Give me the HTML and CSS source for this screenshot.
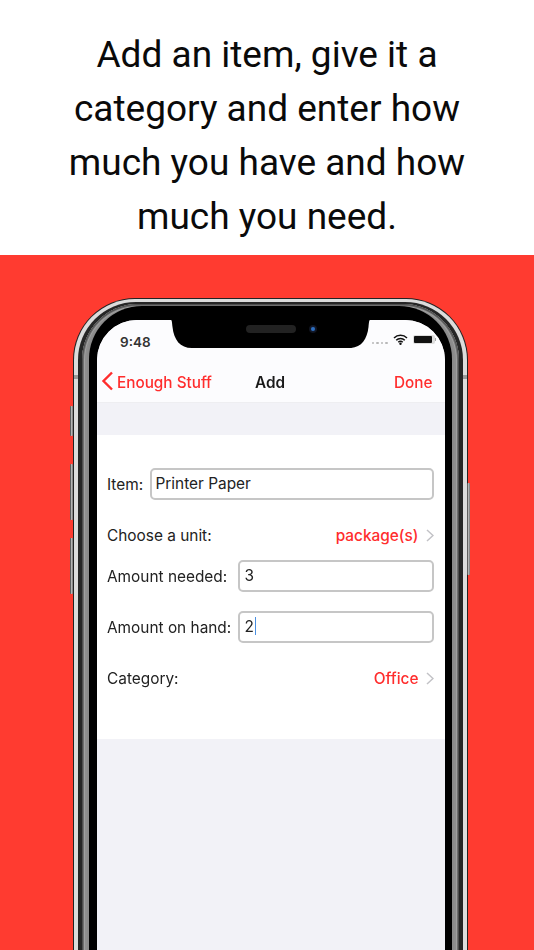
FILE: index.html
```html
<!DOCTYPE html>
<html lang="en">
<head>
<meta charset="utf-8">
<title>Enough Stuff</title>
<link rel="stylesheet" href="styles.css">
</head>
<body>
<header class="hero">
  <h1>Add an item, give it a<br>category and enter how<br>much you have and how<br>much you need.</h1>
</header>
<main class="stage">
  <div class="phone">
    <span class="btn btn-mute"></span>
    <span class="btn btn-up"></span>
    <span class="btn btn-down"></span>
    <span class="btn btn-power"></span>
    <span class="band band-l"></span>
    <span class="band band-r"></span>
    <div class="rim-light">
      <div class="rim-dark">
        <div class="rim-steel">
          <div class="rim-black">
            <div class="screen">
              <svg class="notch" width="199" height="29" viewBox="0 0 199 29"><path d="M0 0H199C198 0 198 3 197.500 7C196 20 190 28 178 28H21C9 28 3 20 1.500 7C1 3 1 0 0 0Z" fill="#000"/></svg>
              <span class="speaker"></span>
              <span class="camera"></span>
              <div class="status">
                <span class="time">9:48</span>
                <span class="status-right">
                  <span class="signal"><i></i><i></i><i></i><i></i></span>
                  <svg class="wifi" width="15" height="11" viewBox="0 0 15 11"><path d="M1 4a9.200 9.200 0 0 1 13 0M3.200 6.200a6 6 0 0 1 8.600 0M5.300 8.200a3 3 0 0 1 4.400 0" fill="none" stroke="#111" stroke-width="1.500"/><circle cx="7.500" cy="9.800" r="1.200" fill="#111"/></svg>
                  <span class="battery"><b></b></span>
                </span>
              </div>
              <nav class="navbar">
                <span class="back">
                  <svg width="13" height="20" viewBox="0 0 13 20"><path d="M11 1.500L2.500 10L11 18.500" fill="none" stroke="#ff2d2d" stroke-width="2.400"/></svg>
                  Enough Stuff
                </span>
                <span class="title">Add</span>
                <span class="done">Done</span>
              </nav>
              <div class="spacer"></div>
              <section class="form">
                <div class="row row-item">
                  <span class="label">Item:</span>
                  <div class="field">Printer Paper</div>
                </div>
                <div class="row row-link row-unit">
                  <span class="label">Choose a unit:</span>
                  <span class="value">package(s)
                    <svg width="8" height="13" viewBox="0 0 8 13"><path d="M1 1l6 5.500L1 12" fill="none" stroke="#c2c2c6" stroke-width="1.500"/></svg>
                  </span>
                </div>
                <div class="row row-needed">
                  <span class="label">Amount needed:</span>
                  <div class="field field-short">3</div>
                </div>
                <div class="row row-hand">
                  <span class="label">Amount on hand:</span>
                  <div class="field field-short">2<span class="caret"></span></div>
                </div>
                <div class="row row-link row-category">
                  <span class="label">Category:</span>
                  <span class="value">Office
                    <svg width="8" height="13" viewBox="0 0 8 13"><path d="M1 1l6 5.500L1 12" fill="none" stroke="#c2c2c6" stroke-width="1.500"/></svg>
                  </span>
                </div>
              </section>
              <div class="rest"></div>
            </div>
          </div>
        </div>
      </div>
    </div>
  </div>
</main>
</body>
</html>
```
FILE: styles.css
```css
* { box-sizing: border-box; }
html, body { margin: 0; height: 950px; overflow: hidden; }
body { display: flex; flex-direction: column; background: #fff; font-family: Inter, "Liberation Sans", sans-serif; }

.hero { height: 255px; flex: none; background: #fff; display: flex; justify-content: center; padding-top: 28px; }
.hero h1 { margin: 0; font: 400 37px/54px Roboto, "Liberation Sans", sans-serif; color: #0a0a0a; text-align: center; }

.stage { flex: 1; background: #ff3b30; overflow: hidden; display: flex; flex-direction: column; align-items: flex-start; padding: 43px 0 0 73px; }

.phone { position: relative; width: 395px; height: 760px; flex: none; background: #232323; border-radius: 62px; padding: 1px 1px 0; }
.rim-light { height: 100%; background: #dcdcdc; border-radius: 61px; padding: 3px 4px 0; }
.rim-dark { height: 100%; background: #262626; border-radius: 58px; padding: 2px 4px 0; }
.rim-steel { height: 100%; background: #8a8a8a; border-radius: 56px; padding: 2px 7px 0; box-shadow: inset 0 0 0 1px #4e4e4e, inset 0 0 0 2px #6e6e6e, inset 0 0 0 3px #a0a0a0, inset 0 0 0 5px #8e8e8e; }
.rim-black { height: 100%; background: #000; border-radius: 53px; padding: 14px 8px 0; }

.screen { position: relative; height: 100%; width: 347.500px; background: #f2f2f7; border-radius: 40px 40px 0 0; overflow: hidden; filter: blur(0.35px); display: flex; flex-direction: column; }

.btn { position: absolute; background: linear-gradient(90deg, #333, #c0c0c0 55%, #666); border-radius: 1px; width: 3px; }
.btn-mute { left: -3px; top: 108px; height: 30px; }
.btn-up { left: -3px; top: 166px; height: 56px; }
.btn-down { left: -3px; top: 240px; height: 56px; }
.btn-power { right: -2px; top: 185px; height: 92px; }
.band { position: absolute; top: 77px; width: 4px; height: 4px; background: #9a9a9a; z-index: 1; }
.band-l { left: 1px; }
.band-r { right: 1px; }

.notch { position: absolute; left: 74px; top: 0; }
.speaker { position: absolute; left: 149px; top: 5px; width: 50px; height: 8px; border-radius: 4px; background: #222; }
.camera { position: absolute; left: 212px; top: 5px; width: 8px; height: 8px; border-radius: 50%; background: radial-gradient(circle, #2d6fc0 0 25%, #12182a 45%, #0b0b0b 100%); }

.status { height: 39px; flex: none; background: #fcfcfe; display: flex; justify-content: space-between; align-items: flex-start; padding: 14px 10px 0 23px; }
.time { font-size: 13.500px; line-height: 16px; font-weight: 600; color: #333; }
.status-right { display: flex; align-items: center; gap: 5px; }
.signal { display: flex; gap: 2px; margin-top: 7px; }
.signal i { width: 2.500px; height: 2.500px; background: #b8b8b8; border-radius: 50%; }
.wifi { display: block; }
.battery { position: relative; display: block; width: 22px; height: 9px; background: #ddd; border-radius: 2px; padding: 1px 3px 1px 1px; }
.battery b { display: block; height: 100%; background: #111; border-radius: 1px; }
.battery::after { content: ""; position: absolute; right: -1px; top: 3px; width: 1px; height: 3px; background: #aaa; }

.navbar { position: relative; height: 44px; flex: none; background: #fcfcfe; border-bottom: 1px solid #eeeef1; display: flex; justify-content: space-between; align-items: center; padding: 4px 12px 0 4px; font-size: 15.300px; font-weight: 500; color: #ff2d2d; }
.back { display: flex; align-items: center; gap: 3px; }
.back svg { display: block; margin-top: -3px; }
.title { position: absolute; left: 158px; color: #1a1a1a; font-weight: 600; }

.spacer { height: 32px; flex: none; }

.form { height: 304px; flex: none; background: #fff; padding: 33px 11px 0 10px; display: flex; flex-direction: column; color: #222; font-size: 15.400px; }
.row { display: flex; align-items: center; justify-content: space-between; }
.row-link { height: 24px; }
.row-unit { margin-top: 23px; }
.row-needed { margin-top: 13px; }
.row-hand { margin-top: 19px; }
.row-category { margin-top: 23px; }
.label { white-space: nowrap; }
.field { height: 32px; width: 284px; border: 2px solid #c6c6c6; border-radius: 5px; padding: 0 4px 2px; display: flex; align-items: center; background: #fff; }
.field-short { width: 196px; padding-left: 5px; }
.caret { width: 1px; height: 18px; background: #4a90e2; margin-left: 1px; }
.value { display: flex; align-items: center; gap: 7px; color: #ff2d2d; font-weight: 500; }
.value svg { display: block; }

.rest { flex: 1; background: #f2f2f7; }
```
